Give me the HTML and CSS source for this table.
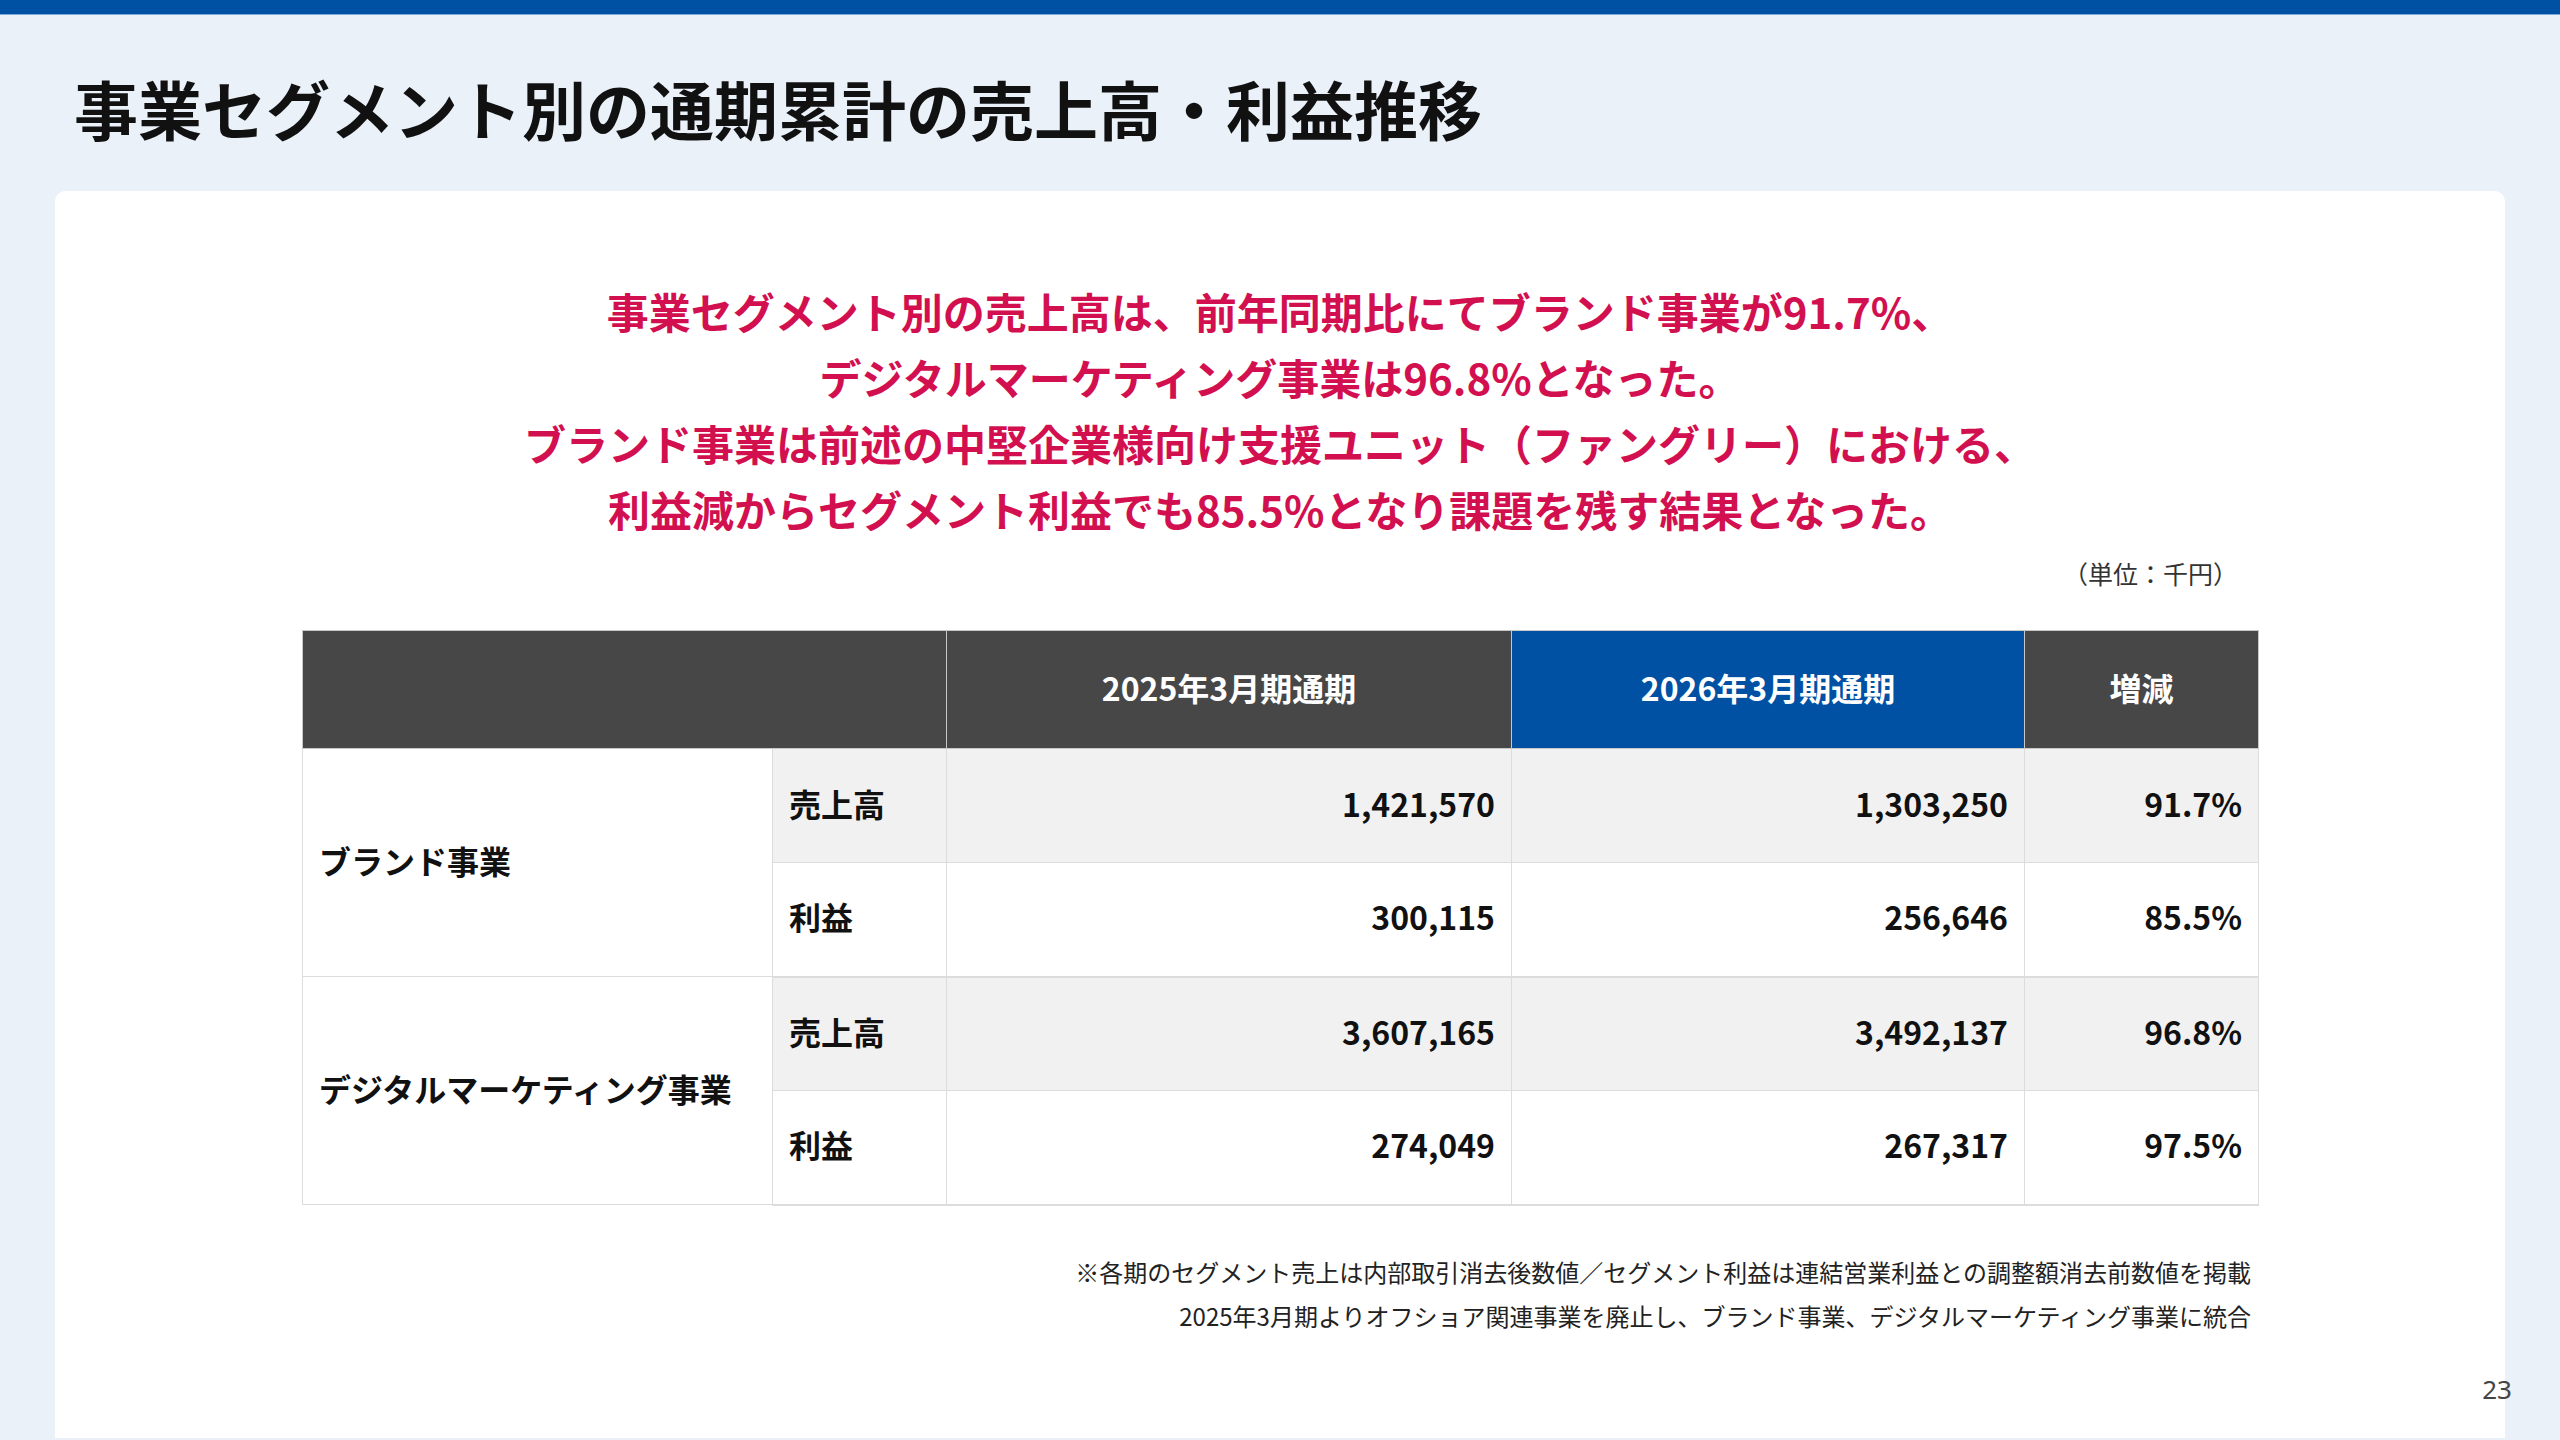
FILE: index.html
```html
<!DOCTYPE html>
<html lang="ja">
<head>
<meta charset="utf-8">
<title>事業セグメント別の通期累計の売上高・利益推移</title>
<link rel="stylesheet" href="styles.css">
</head>
<body>
<div class="topbar"></div>
<h1 class="title">事業セグメント別の通期累計の売上高・利益推移</h1>
<main class="card">
  <p class="lead">事業セグメント別の売上高は、前年同期比にてブランド事業が91.7%、<br>デジタルマーケティング事業は96.8%となった。<br>ブランド事業は前述の中堅企業様向け支援ユニット（ファングリー）における、<br>利益減からセグメント利益でも85.5%となり課題を残す結果となった。</p>
  <div class="content">
    <div class="unit">（単位：千円）</div>
    <table class="data">
      <colgroup>
        <col class="c1"><col class="c2"><col class="c3"><col class="c4"><col class="c5">
      </colgroup>
      <thead>
        <tr>
          <th colspan="2"></th>
          <th>2025年3月期通期</th>
          <th class="current">2026年3月期通期</th>
          <th>増減</th>
        </tr>
      </thead>
      <tbody>
        <tr class="shade">
          <td rowspan="2" class="seg">ブランド事業</td>
          <td class="item">売上高</td>
          <td class="num">1,421,570</td>
          <td class="num">1,303,250</td>
          <td class="num">91.7%</td>
        </tr>
        <tr class="group-end">
          <td class="item">利益</td>
          <td class="num">300,115</td>
          <td class="num">256,646</td>
          <td class="num">85.5%</td>
        </tr>
        <tr class="shade">
          <td rowspan="2" class="seg">デジタルマーケティング事業</td>
          <td class="item">売上高</td>
          <td class="num">3,607,165</td>
          <td class="num">3,492,137</td>
          <td class="num">96.8%</td>
        </tr>
        <tr class="group-end">
          <td class="item">利益</td>
          <td class="num">274,049</td>
          <td class="num">267,317</td>
          <td class="num">97.5%</td>
        </tr>
      </tbody>
    </table>
    <div class="notes">
      <p>※各期のセグメント売上は内部取引消去後数値／セグメント利益は連結営業利益との調整額消去前数値を掲載</p>
      <p>2025年3月期よりオフショア関連事業を廃止し、ブランド事業、デジタルマーケティング事業に統合</p>
    </div>
  </div>
  <div class="page">23</div>
</main>
</body>
</html>
```

FILE: styles.css
```css
html, body {
  margin: 0;
  padding: 0;
}
body {
  width: 2560px;
  height: 1440px;
  overflow: hidden;
  background: #eaf1f9;
  font-family: "Noto Sans CJK JP", "Noto Sans", sans-serif;
  color: #111;
  display: flex;
  flex-direction: column;
}
.topbar {
  height: 14px;
  background: #0050a4;
  border-bottom: 1px solid #7fa8d6;
  flex: none;
}
.title {
  margin: 44px 0 0 74px;
  font-size: 64px;
  line-height: 96px;
  font-weight: 700;
  color: #111;
  letter-spacing: 0;
}
.card {
  position: relative;
  margin: 36px 55px 2px 55px;
  flex: 1;
  background: #ffffff;
  border-radius: 10px 10px 0 0;
  display: flex;
  flex-direction: column;
  align-items: center;
}
.lead {
  margin: 87px 0 0 0;
  text-align: center;
  color: #d3104f;
  font-size: 42px;
  line-height: 66px;
  font-weight: 700;
}
.content {
  width: 1956px;
  display: flex;
  flex-direction: column;
}
.unit {
  margin-top: 15px;
  text-align: right;
  padding-right: 20px;
  font-size: 25px;
  line-height: 32px;
  color: #333;
}
.data {
  margin-top: 41px;
  width: 1956px;
  border-collapse: collapse;
  table-layout: fixed;
  font-size: 32px;
  font-weight: 700;
  color: #111;
}
.c1 { width: 470px; }
.c2 { width: 174px; }
.c3 { width: 565px; }
.c4 { width: 513px; }
.c5 { width: 234px; }
.data th {
  height: 118px;
  padding: 0 0 6px 0;
  box-sizing: border-box;
  background: #474747;
  color: #ffffff;
  font-weight: 700;
  text-align: center;
  border: 1px solid #c8c8c8;
}
.data th.current {
  background: #0050a4;
}
.data td {
  height: 114px;
  box-sizing: border-box;
  padding: 0 16px 6px 16px;
  border: 1px solid #dcdcdc;
  vertical-align: middle;
  white-space: nowrap;
}
.data tr.shade td {
  background: #f1f1f1;
}
.data tr.shade td.seg {
  background: #ffffff;
}
.data tr.group-end td {
  border-bottom: 2px solid #dcdcdc;
}
.data td.seg {
  text-align: left;
  padding-left: 16px;
}
.data td.item {
  text-align: left;
}
.data td.num {
  text-align: right;
}
.notes {
  margin-top: 44px;
  padding-right: 7px;
  text-align: right;
  font-size: 24px;
  line-height: 44px;
  color: #222;
}
.notes p {
  margin: 0;
}
.page {
  position: absolute;
  right: -7px;
  bottom: 33px;
  font-size: 26px;
  line-height: 32px;
  color: #444;
  font-family: "Noto Sans", "Noto Sans CJK JP", sans-serif;
}
```
